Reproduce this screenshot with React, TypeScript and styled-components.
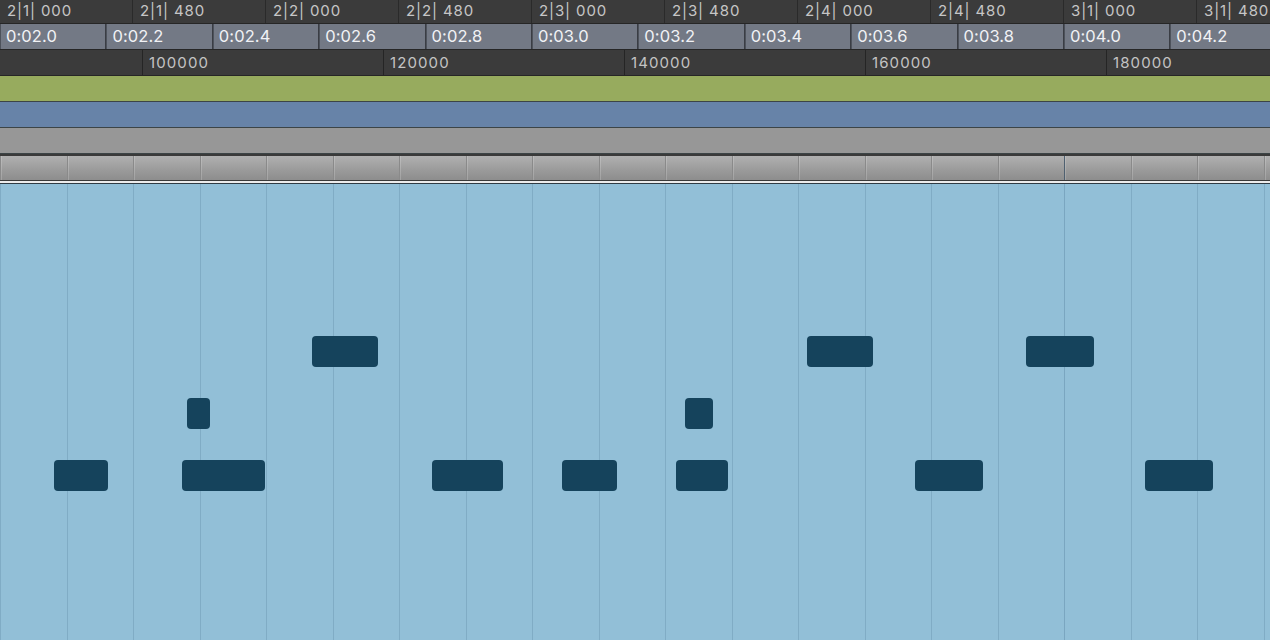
import styled, { createGlobalStyle } from "styled-components";

const GlobalStyle = createGlobalStyle`
  html, body {
    margin: 0;
    padding: 0;
    background: #92bfd7;
    overflow: hidden;
  }
  body {
    font-family: Inter, "Noto Sans", "DejaVu Sans", sans-serif;
  }
`;

const BEAT = 133;
const ROLL_TOP = 184;

const bars = [
  "2|1| 000", "2|1| 480", "2|2| 000", "2|2| 480", "2|3| 000",
  "2|3| 480", "2|4| 000", "2|4| 480", "3|1| 000", "3|1| 480",
];

const times = [
  "0:02.0", "0:02.2", "0:02.4", "0:02.6", "0:02.8", "0:03.0",
  "0:03.2", "0:03.4", "0:03.6", "0:03.8", "0:04.0", "0:04.2",
];

const samples = ["", "100000", "120000", "140000", "160000", "180000"];

// left, top, width
const notes: [number, number, number][] = [
  [312, 336, 66],
  [807, 336, 66],
  [1026, 336, 68],
  [187, 398, 23],
  [685, 398, 28],
  [54, 460, 54],
  [182, 460, 83],
  [432, 460, 71],
  [562, 460, 55],
  [676, 460, 52],
  [915, 460, 68],
  [1145, 460, 68],
];

const App = () => {
  return (
    <Screen>
      <GlobalStyle />
      <Ruler $bg="#3b3b3b" $height={24}>
        {bars.map((b) => (
          <BarCell key={b}>{b}</BarCell>
        ))}
      </Ruler>
      <Ruler $bg="#2c2c2e" $height={26}>
        {times.map((t) => (
          <TimeCell key={t}>{t}</TimeCell>
        ))}
      </Ruler>
      <Ruler $bg="#3b3b3b" $height={26}>
        {samples.map((s, i) => (
          <SampleCell key={i} $first={i === 0}>
            {s}
          </SampleCell>
        ))}
      </Ruler>
      <Band $color="#97ab5e" />
      <Band $color="#6783a8" />
      <Band $color="#979797" />
      <LaneStrip>
        {Array.from({ length: 20 }).map((_, i) => (
          <LaneCell key={i} $marked={i === 16} />
        ))}
      </LaneStrip>
      <RollDivider />
      <PianoRoll>
        {Array.from({ length: 20 }).map((_, i) => (
          <GridColumn key={i} $marked={i === 16} />
        ))}
        {notes.map(([l, t, w], i) => (
          <Note key={i} style={{ left: l, top: t - ROLL_TOP, width: w }} />
        ))}
      </PianoRoll>
    </Screen>
  );
};

export default App;

const Screen = styled.div`
  width: 1270px;
  height: 640px;
  display: flex;
  flex-direction: column;
  overflow: hidden;
`;

const Ruler = styled.div<{ $bg: string; $height: number }>`
  display: flex;
  height: ${(p) => p.$height}px;
  background: ${(p) => p.$bg};
  border-bottom: 1px solid #262626;
  box-sizing: border-box;
  flex-shrink: 0;
  white-space: nowrap;
`;

const BarCell = styled.div`
  flex: 0 0 ${BEAT}px;
  box-sizing: border-box;
  border-right: 1px solid #2a2a2a;
  padding-left: 7px;
  color: #c6c6c6;
  font-size: 15px;
  letter-spacing: 0.9px;
  line-height: 22px;
`;

const TimeCell = styled.div`
  flex: 0 0 ${BEAT * 0.8}px;
  box-sizing: border-box;
  background: #737985;
  border-right: 1px solid #3a3d44;
  border-left: 1px solid #4d525b;
  padding-left: 5px;
  color: #f1f2f5;
  font-size: 16.5px;
  letter-spacing: 0.1px;
  line-height: 25px;
`;

const SampleCell = styled.div<{ $first: boolean }>`
  flex: 0 0 ${(p) => (p.$first ? 143 : 241)}px;
  box-sizing: border-box;
  border-right: 1px solid #252525;
  padding-left: 6px;
  color: #c4c4c4;
  font-size: 15px;
  letter-spacing: 1.1px;
  line-height: 25px;
`;

const Band = styled.div<{ $color: string }>`
  height: 26px;
  flex-shrink: 0;
  box-sizing: border-box;
  background: ${(p) => p.$color};
  border-bottom: 1px solid #3c4446;
`;

const LaneStrip = styled.div`
  display: flex;
  height: 27px;
  flex-shrink: 0;
  box-sizing: border-box;
  border-top: 2px solid #3a3a3a;
  border-bottom: 1px solid #3a3a3a;
  background: linear-gradient(#b0b0b0, #9a9a9a 60%, #8d8d8d);
`;

const LaneCell = styled.div<{ $marked: boolean }>`
  flex: 0 0 ${BEAT / 2}px;
  box-sizing: border-box;
  border-left: 1px solid ${(p) => (p.$marked ? "#4f6070" : "#8a8a8a")};
  box-shadow: inset 1px 0 0 rgba(255, 255, 255, 0.18);
`;

const RollDivider = styled.div`
  height: 2px;
  flex-shrink: 0;
  background: #ececec;
  border-bottom: 1px solid #2f3b44;
`;

const PianoRoll = styled.div`
  position: relative;
  display: flex;
  flex: 1;
  background: #92bfd7;
`;

const GridColumn = styled.div<{ $marked: boolean }>`
  flex: 0 0 ${BEAT / 2}px;
  box-sizing: border-box;
  border-left: 1px solid ${(p) => (p.$marked ? "#7aa6c0" : "#80acc5")};
`;

const Note = styled.div`
  position: absolute;
  height: 31px;
  background: #15435c;
  border-radius: 4px;
`;
